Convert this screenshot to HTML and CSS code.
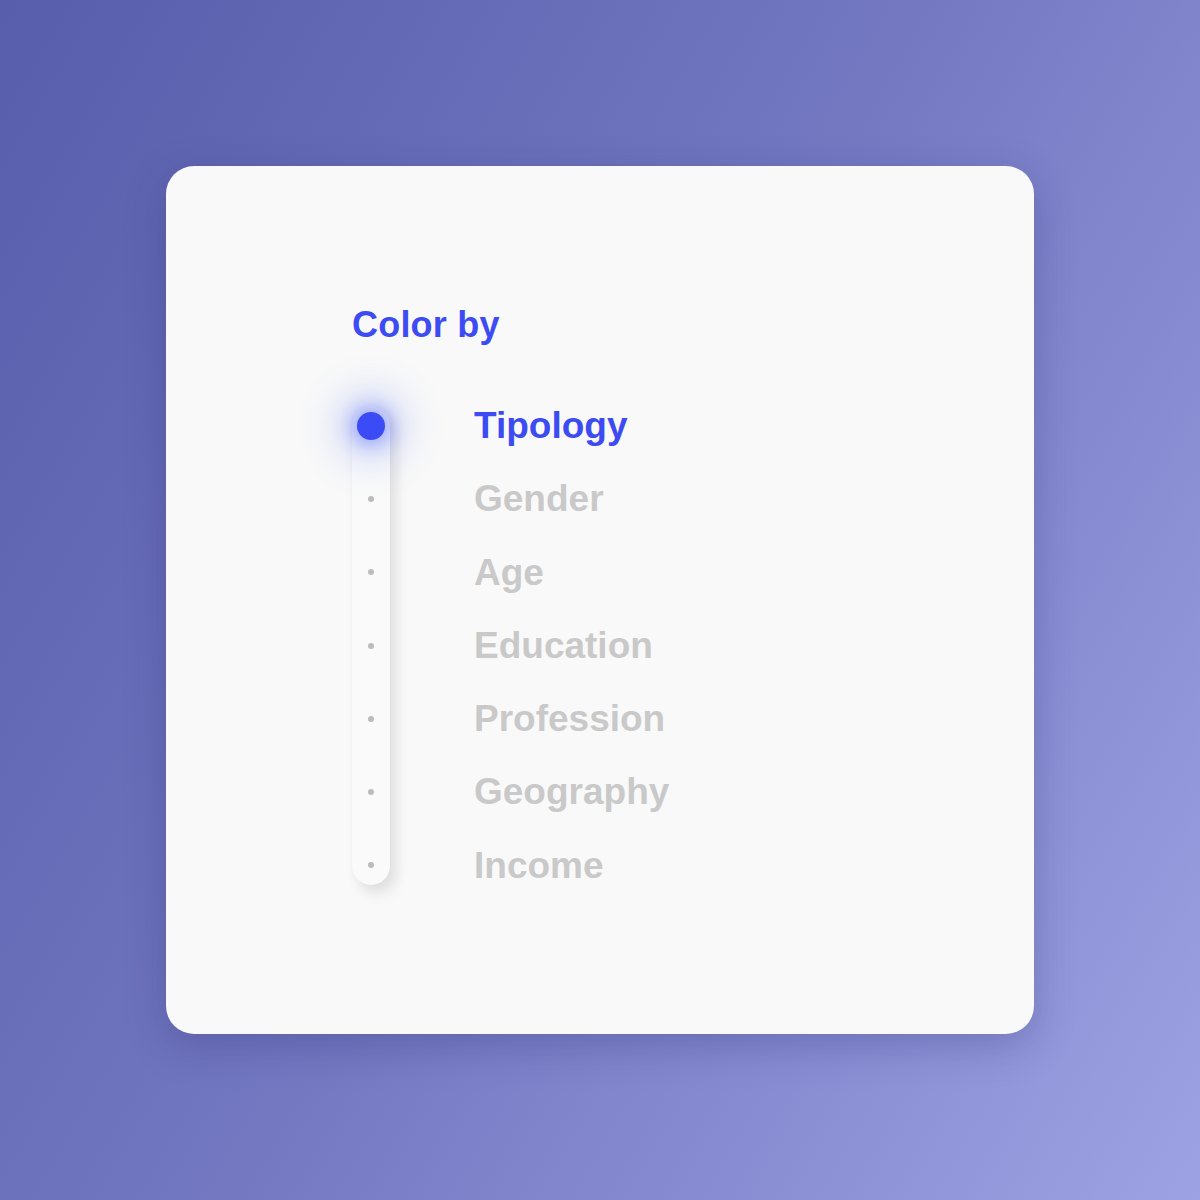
FILE: index.html
```html
<!DOCTYPE html>
<html lang="en">
<head>
    <meta charset="UTF-8">
    <meta name="viewport" content="width=device-width, initial-scale=1.0">
    <title>Color by</title>

    <!-- styles -->
    <link rel="stylesheet" href="styles.css">
</head>
<body>

    <!-- card with the "color by" picker -->
    <div class="card">
        <div class="picker">
            <div class="picker-title">Color by</div>

            <div class="options">
                <!-- slider track with one stop per option -->
                <div class="track">
                    <div class="stop"><span class="dot active"></span></div>
                    <div class="stop"><span class="dot"></span></div>
                    <div class="stop"><span class="dot"></span></div>
                    <div class="stop"><span class="dot"></span></div>
                    <div class="stop"><span class="dot"></span></div>
                    <div class="stop"><span class="dot"></span></div>
                    <div class="stop"><span class="dot"></span></div>
                </div>

                <ul class="labels">
                    <li class="active">Tipology</li>
                    <li>Gender</li>
                    <li>Age</li>
                    <li>Education</li>
                    <li>Profession</li>
                    <li>Geography</li>
                    <li>Income</li>
                </ul>
            </div>
        </div>
    </div>

</body>
</html>
```

FILE: styles.css
```css
/* page background */
body {
    margin: 0;
    height: 1200px;
    display: flex;
    justify-content: center;
    align-items: center;
    background: linear-gradient(120deg, #585dac 0%, #7479c2 50%, #9da2e4 100%);
    font-family: "Liberation Sans", Arial, sans-serif;
}

/* white card */
.card {
    width: 868px;
    height: 868px;
    box-sizing: border-box;
    padding: 137px 0 0 186px;
    background-color: #f9f9f9;
    border-radius: 28px;
    box-shadow: 0 12px 40px rgba(40, 40, 110, 0.28);
}

.picker-title {
    font-size: 36px;
    font-weight: bold;
    line-height: 44px;
    color: #3d4cf2;
    letter-spacing: 0.2px;
}

.options {
    margin-top: 42px;
    display: flex;
    gap: 84px;
}

/* vertical slider */
.track {
    position: relative;
    width: 38px;
}

.track::before {
    content: "";
    position: absolute;
    top: 17px;
    bottom: 17px;
    left: 0;
    right: 0;
    border-radius: 19px;
    background-color: #fafafa;
    box-shadow: 6px 8px 14px rgba(0, 0, 0, 0.11), 0 0 2px rgba(0, 0, 0, 0.04);
}

.stop {
    position: relative;
    height: 73.3px;
    display: flex;
    justify-content: center;
    align-items: center;
}

.dot {
    width: 6px;
    height: 6px;
    border-radius: 50%;
    background-color: #bcbcbc;
}

/* selected stop with a blue glow */
.dot.active {
    width: 28px;
    height: 28px;
    background-color: #3b4bf5;
    box-shadow: 0 0 16px 6px rgba(70, 95, 245, 0.35), 0 0 40px 18px rgba(80, 105, 245, 0.3);
}

/* option names */
.labels {
    list-style: none;
    margin: 0;
    padding: 0;
}

.labels li {
    height: 73.3px;
    line-height: 73.3px;
    font-size: 37px;
    font-weight: bold;
    color: #c9c9c9;
}

.labels li.active {
    color: #3d4cf2;
}
```
